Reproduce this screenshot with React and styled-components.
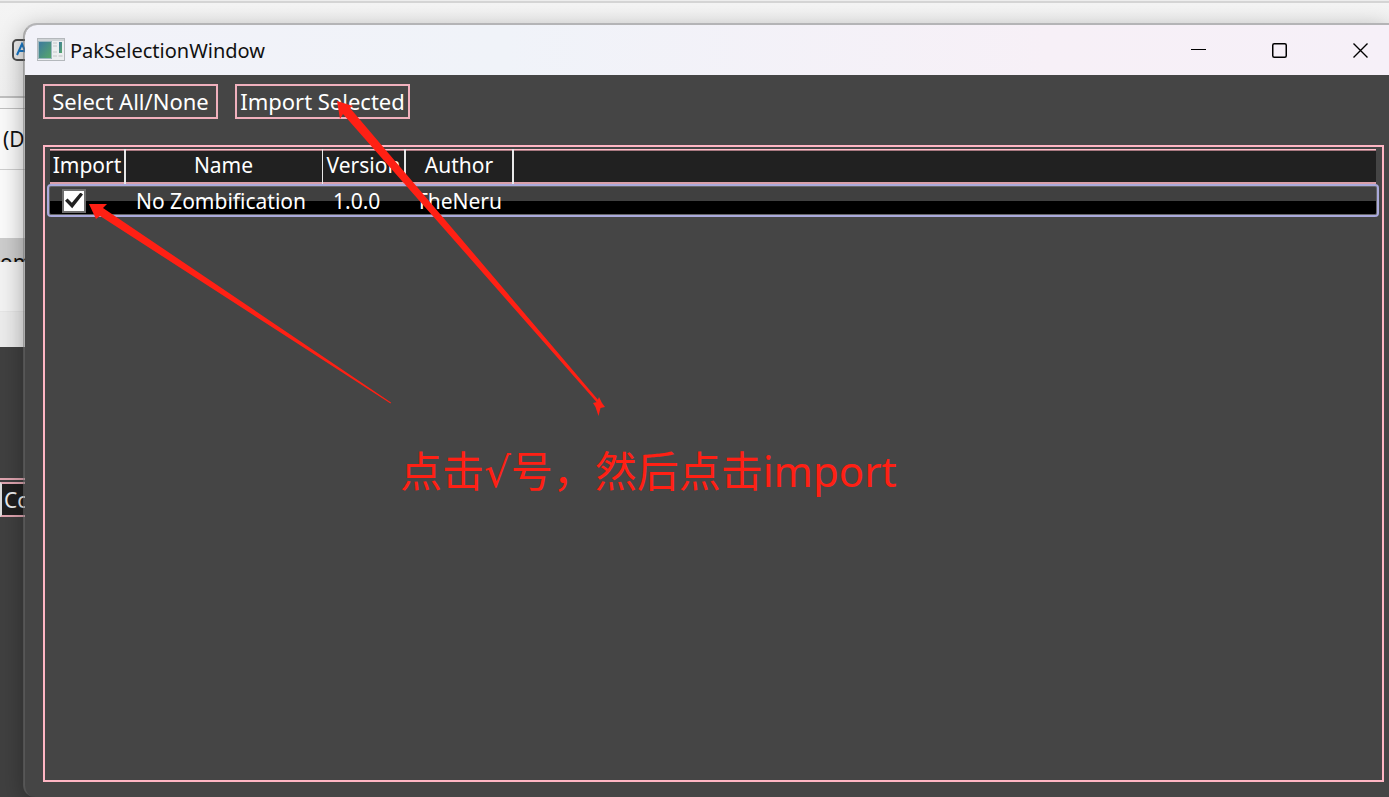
import React from "react";
import styled, { createGlobalStyle } from "styled-components";

const GlobalStyle = createGlobalStyle`
  * { box-sizing: border-box; }
  body {
    margin: 0;
    background: #404040;
    font-family: "Noto Sans", "Noto Sans CJK SC", sans-serif;
  }
`;

const Desktop = styled.main`
  position: relative;
  height: 100vh;
  overflow: hidden;
`;

const BackWindow = styled.section`
  height: 100%;
  display: flex;
  flex-direction: column;
  background: #404040;
  line-height: 32px;
  white-space: nowrap;
`;

const BackStrip = styled.div`
  flex: none;
  height: ${(p) => p.$h}px;
  background: ${(p) => p.$bg};
  border-bottom: ${(p) => p.$line || 0}px solid ${(p) => p.$lineColor || "#c0c0c0"};
  padding-left: ${(p) => p.$indent || 0}px;
  padding-top: ${(p) => p.$top || 0}px;
  font-size: 21px;
  color: #111;
  overflow: hidden;
  display: flex;
  align-items: ${(p) => p.$align || "center"};
`;

const BackPanel = styled.div`
  flex: 1;
  margin-top: 131px;
  border-top: 2px solid #e0a5b0;
  padding-top: 2px;
`;

const BackButton = styled.button`
  display: block;
  width: 120px;
  height: 35px;
  padding: 0 0 0 2px;
  border: 2px solid #e0a5b0;
  border-left-color: #dcdcdc;
  background: #202020;
  color: #eee;
  font: 21px/28px "Noto Sans", sans-serif;
  text-align: left;
`;

const Window = styled.section`
  position: absolute;
  inset: 23px 0 0 23px;
  display: flex;
  flex-direction: column;
  border: solid #b4b4b6;
  border-width: 2px 0 0 2px;
  border-left-color: rgba(110, 110, 110, 0.5);
  border-radius: 14px 0 0 12px;
  background: #454545;
  background-clip: padding-box;
  box-shadow: 0 6px 24px rgba(0, 0, 0, 0.32);
  overflow: hidden;
`;

const TitleBar = styled.header`
  flex: none;
  height: 50px;
  padding-left: 12px;
  display: flex;
  align-items: center;
  gap: 5px;
  background: linear-gradient(90deg, #f2f2f9, #f0f3f9 35%, #f7f0f7 75%, #f6f0f8);
`;

const Title = styled.h1`
  margin: 0;
  padding-top: 2px;
  flex: 1;
  font-size: 20px;
  line-height: 28px;
  font-weight: 400;
  color: #111;
`;

const Controls = styled.div`
  display: flex;
  align-self: stretch;
  margin-right: -12px;
`;

const ControlButton = styled.button`
  width: 81px;
  padding: 0;
  border: 0;
  background: none;
  display: flex;
  align-items: center;
  justify-content: center;
`;

const Toolbar = styled.div`
  flex: none;
  display: flex;
  gap: 17px;
  padding: 9px 18px 26px;
`;

const ToolButton = styled.button`
  width: 175px;
  height: 35px;
  padding: 0 0 2px;
  border: 2px solid #f0b0bd;
  background: #454545;
  color: #fff;
  font: 22px/28px "Noto Sans", sans-serif;
  white-space: nowrap;
`;

const ListFrame = styled.div`
  flex: 1;
  margin: 0 5px 15px 18px;
  padding: 2px 6px 0 5px;
  border: 2px solid #ffb6c4;
`;

const Table = styled.table`
  width: 100%;
  table-layout: fixed;
  border-collapse: separate;
  border-spacing: 0;
  color: #fff;
  font-size: 21px;
  line-height: 28px;
`;

const Col = styled.col`
  width: ${(p) => (p.$w ? `${p.$w}px` : "auto")};
`;

const HeadCell = styled.th`
  height: 35px;
  padding: 0 2px 3px 0;
  font-weight: 400;
  text-align: center;
  white-space: nowrap;
  background:
    linear-gradient(#e8e8e8, #e8e8e8) right / ${(p) => p.$divider || 0}px 100% no-repeat,
    linear-gradient(#ffc0cb 1px, #a87880 1px 2px, #212121 2px 33px, #d9a0aa 33px);
`;

const Row = styled.tr`
  position: relative;
  background: linear-gradient(#404040 17px, #000 17px);
`;

const Cell = styled.td`
  height: 33px;
  padding: 0 0 0 ${(p) => p.$pad}px;
  white-space: nowrap;

  &:last-child::after {
    content: "";
    position: absolute;
    inset: 0 -3px;
    border: 2px solid #aaaadc;
    border-radius: 4px;
    box-shadow: inset 0 0 0 1px #666;
    pointer-events: none;
  }
`;

const CheckLabel = styled.label`
  display: flex;
  width: 24px;
`;

const CheckBox = styled.input`
  appearance: none;
  width: 24px;
  height: 24px;
  margin: 0;
  border: 2px solid #707070;
  display: grid;
  place-items: center;
  background: #fff;

  &:checked::after {
    content: "";
    width: 18px;
    height: 16px;
    background: #212121;
    clip-path: polygon(0 52%, 14% 38%, 38% 64%, 86% 0, 100% 13%, 40% 98%);
  }
`;

const Arrows = styled.svg`
  position: absolute;
  left: 0;
  top: 0;
  pointer-events: none;
`;

const Note = styled.p`
  position: absolute;
  left: 400px;
  top: 441px;
  margin: 0;
  color: #ff2014;
  font: 42px/60px "Noto Sans", "Noto Sans CJK SC", sans-serif;
  white-space: nowrap;
`;

const Root = styled.span`
  font-family: "DejaVu Sans", sans-serif;
`;

const AppIcon = () => (
  <svg width="28" height="24" viewBox="0 0 28 24" aria-hidden="true">
    <defs>
      <linearGradient id="pane" x1="0" y1="0" x2="1" y2="1">
        <stop offset="0" stopColor="#3c78a0" />
        <stop offset="1" stopColor="#58a868" />
      </linearGradient>
    </defs>
    <rect x="0.5" y="0.5" width="27" height="22" fill="#eceef0" stroke="#b4b8bc" />
    <rect x="1" y="1" width="26" height="2" fill="#cfd3d6" />
    <rect x="1.5" y="3.5" width="13" height="17" fill="url(#pane)" stroke="#9db8c0" />
    <path d="M16 5h4M16 8h4M16 14h4M16 18h4" stroke="#d8dadc" strokeWidth="2" />
    <rect x="22" y="4" width="3" height="11" fill="url(#pane)" />
    <path d="M21.5 18h4" stroke="#d4d6d8" strokeWidth="2" />
  </svg>
);

const LetterIcon = () => (
  <svg width="24" height="22" viewBox="0 0 24 22" aria-hidden="true">
    <rect x="1" y="1" width="22" height="20" rx="4" fill="#eee" stroke="#505050" strokeWidth="2" />
    <path d="M5 16L10 5l5 11M7 12h6" fill="none" stroke="#1878c8" strokeWidth="2" />
  </svg>
);

export default function App() {
  return (
    <>
      <GlobalStyle />
      <Desktop>
        <BackWindow>
          <BackStrip $h={3} $bg="#ededed" $line={2} $lineColor="#d4d4d4" />
          <BackStrip $h={95} $bg="linear-gradient(#f4f4f4, #f0f0f0)" $line={2} $indent={12}>
            <LetterIcon />
          </BackStrip>
          <BackStrip $h={11} $bg="#f8f8f8" $line={1} />
          <BackStrip $h={61} $bg="#fafafa" $line={1} $lineColor="#cfcfcf" $indent={3}>
            (D
          </BackStrip>
          <BackStrip $h={68} $bg="#fbfbfb" />
          <BackStrip $h={24} $bg="#cdcdcd" $align="flex-start" $top={8}>
            <span>om</span>
          </BackStrip>
          <BackStrip $h={50} $bg="#f3f3f3" $line={1} $lineColor="#e6e6e6" />
          <BackStrip $h={35} $bg="#ececec" />
          <BackPanel>
            <BackButton>Co</BackButton>
          </BackPanel>
        </BackWindow>

        <Window>
          <TitleBar>
            <AppIcon />
            <Title>PakSelectionWindow</Title>
            <Controls>
              <ControlButton aria-label="Minimize">
                <svg width="15" height="15"><path d="M0 6.5h15" stroke="#000" /></svg>
              </ControlButton>
              <ControlButton aria-label="Maximize">
                <svg width="15" height="15">
                  <rect x="0.75" y="0.75" width="13.5" height="13.5" rx="1.5" fill="none" stroke="#000" strokeWidth="1.5" />
                </svg>
              </ControlButton>
              <ControlButton aria-label="Close">
                <svg width="15" height="15"><path d="M0.5 0.5l14 14M14.5 0.5l-14 14" stroke="#000" strokeWidth="1.4" /></svg>
              </ControlButton>
            </Controls>
          </TitleBar>

          <Toolbar>
            <ToolButton>Select All/None</ToolButton>
            <ToolButton>Import Selected</ToolButton>
          </Toolbar>

          <ListFrame>
            <Table>
              <colgroup>
                <Col $w={76} />
                <Col $w={197} />
                <Col $w={83} />
                <Col $w={108} />
                <Col />
              </colgroup>
              <thead>
                <tr>
                  <HeadCell $divider={2}>Import</HeadCell>
                  <HeadCell $divider={1}>Name</HeadCell>
                  <HeadCell $divider={2}>Version</HeadCell>
                  <HeadCell $divider={2}>Author</HeadCell>
                  <HeadCell />
                </tr>
              </thead>
              <tbody>
                <Row>
                  <Cell $pad={12}>
                    <CheckLabel>
                      <CheckBox type="checkbox" defaultChecked aria-label="Import No Zombification" />
                    </CheckLabel>
                  </Cell>
                  <Cell $pad={10}>No Zombification</Cell>
                  <Cell $pad={10}>1.0.0</Cell>
                  <Cell $pad={10}>TheNeru</Cell>
                  <Cell $pad={0} />
                </Row>
              </tbody>
            </Table>
          </ListFrame>
        </Window>

        <Arrows width="640" height="430" fill="#ff2014" aria-hidden="true">
          <path d="M89 204L107 204L103 208L391 402.5L390.5 403.5L100 216L96 219Z" />
          <path d="M337 101L353 106L350 108L599 401L597 402.5L343 114L340 119Z" />
          <path d="M599 397L602 403L605 407L600.5 408L598.5 416L595.5 407L593 403L597 402Z" />
        </Arrows>
        <Note>
          点击<Root>√</Root>号，然后点击import
        </Note>
      </Desktop>
    </>
  );
}
